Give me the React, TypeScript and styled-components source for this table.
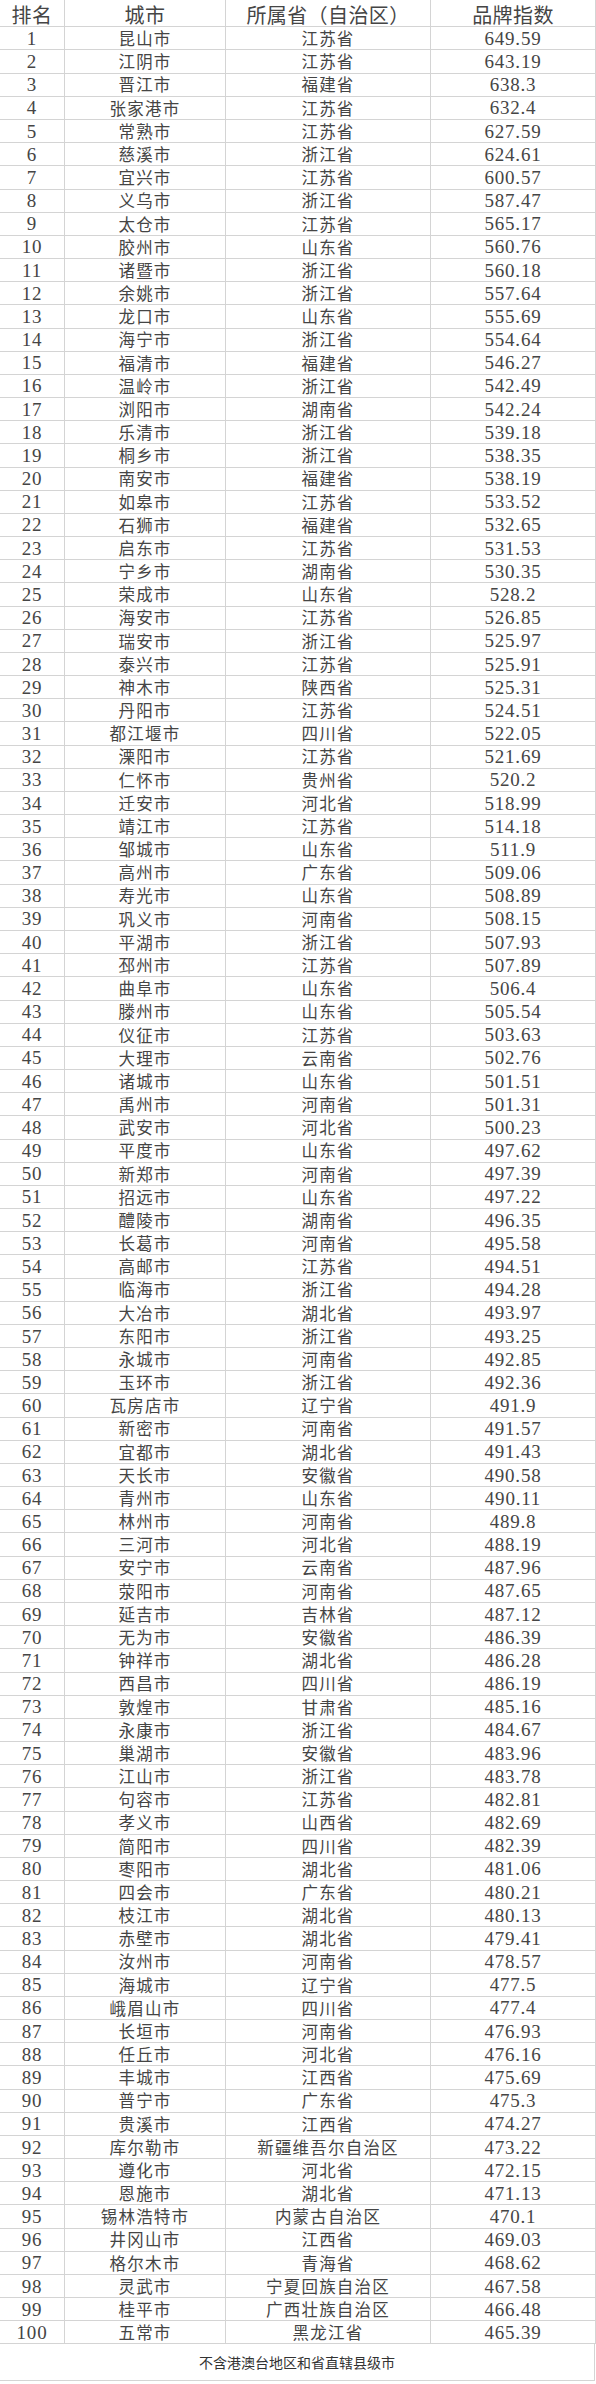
import styled, { createGlobalStyle } from 'styled-components'

const GlobalStyle = createGlobalStyle`
  html, body {
    margin: 0;
    padding: 0;
    background: #ffffff;
  }
`

type City = [string, string, string]

const cities: City[] = [
  ['昆山市', '江苏省', '649.59'],
  ['江阴市', '江苏省', '643.19'],
  ['晋江市', '福建省', '638.3'],
  ['张家港市', '江苏省', '632.4'],
  ['常熟市', '江苏省', '627.59'],
  ['慈溪市', '浙江省', '624.61'],
  ['宜兴市', '江苏省', '600.57'],
  ['义乌市', '浙江省', '587.47'],
  ['太仓市', '江苏省', '565.17'],
  ['胶州市', '山东省', '560.76'],
  ['诸暨市', '浙江省', '560.18'],
  ['余姚市', '浙江省', '557.64'],
  ['龙口市', '山东省', '555.69'],
  ['海宁市', '浙江省', '554.64'],
  ['福清市', '福建省', '546.27'],
  ['温岭市', '浙江省', '542.49'],
  ['浏阳市', '湖南省', '542.24'],
  ['乐清市', '浙江省', '539.18'],
  ['桐乡市', '浙江省', '538.35'],
  ['南安市', '福建省', '538.19'],
  ['如皋市', '江苏省', '533.52'],
  ['石狮市', '福建省', '532.65'],
  ['启东市', '江苏省', '531.53'],
  ['宁乡市', '湖南省', '530.35'],
  ['荣成市', '山东省', '528.2'],
  ['海安市', '江苏省', '526.85'],
  ['瑞安市', '浙江省', '525.97'],
  ['泰兴市', '江苏省', '525.91'],
  ['神木市', '陕西省', '525.31'],
  ['丹阳市', '江苏省', '524.51'],
  ['都江堰市', '四川省', '522.05'],
  ['溧阳市', '江苏省', '521.69'],
  ['仁怀市', '贵州省', '520.2'],
  ['迁安市', '河北省', '518.99'],
  ['靖江市', '江苏省', '514.18'],
  ['邹城市', '山东省', '511.9'],
  ['高州市', '广东省', '509.06'],
  ['寿光市', '山东省', '508.89'],
  ['巩义市', '河南省', '508.15'],
  ['平湖市', '浙江省', '507.93'],
  ['邳州市', '江苏省', '507.89'],
  ['曲阜市', '山东省', '506.4'],
  ['滕州市', '山东省', '505.54'],
  ['仪征市', '江苏省', '503.63'],
  ['大理市', '云南省', '502.76'],
  ['诸城市', '山东省', '501.51'],
  ['禹州市', '河南省', '501.31'],
  ['武安市', '河北省', '500.23'],
  ['平度市', '山东省', '497.62'],
  ['新郑市', '河南省', '497.39'],
  ['招远市', '山东省', '497.22'],
  ['醴陵市', '湖南省', '496.35'],
  ['长葛市', '河南省', '495.58'],
  ['高邮市', '江苏省', '494.51'],
  ['临海市', '浙江省', '494.28'],
  ['大冶市', '湖北省', '493.97'],
  ['东阳市', '浙江省', '493.25'],
  ['永城市', '河南省', '492.85'],
  ['玉环市', '浙江省', '492.36'],
  ['瓦房店市', '辽宁省', '491.9'],
  ['新密市', '河南省', '491.57'],
  ['宜都市', '湖北省', '491.43'],
  ['天长市', '安徽省', '490.58'],
  ['青州市', '山东省', '490.11'],
  ['林州市', '河南省', '489.8'],
  ['三河市', '河北省', '488.19'],
  ['安宁市', '云南省', '487.96'],
  ['荥阳市', '河南省', '487.65'],
  ['延吉市', '吉林省', '487.12'],
  ['无为市', '安徽省', '486.39'],
  ['钟祥市', '湖北省', '486.28'],
  ['西昌市', '四川省', '486.19'],
  ['敦煌市', '甘肃省', '485.16'],
  ['永康市', '浙江省', '484.67'],
  ['巢湖市', '安徽省', '483.96'],
  ['江山市', '浙江省', '483.78'],
  ['句容市', '江苏省', '482.81'],
  ['孝义市', '山西省', '482.69'],
  ['简阳市', '四川省', '482.39'],
  ['枣阳市', '湖北省', '481.06'],
  ['四会市', '广东省', '480.21'],
  ['枝江市', '湖北省', '480.13'],
  ['赤壁市', '湖北省', '479.41'],
  ['汝州市', '河南省', '478.57'],
  ['海城市', '辽宁省', '477.5'],
  ['峨眉山市', '四川省', '477.4'],
  ['长垣市', '河南省', '476.93'],
  ['任丘市', '河北省', '476.16'],
  ['丰城市', '江西省', '475.69'],
  ['普宁市', '广东省', '475.3'],
  ['贵溪市', '江西省', '474.27'],
  ['库尔勒市', '新疆维吾尔自治区', '473.22'],
  ['遵化市', '河北省', '472.15'],
  ['恩施市', '湖北省', '471.13'],
  ['锡林浩特市', '内蒙古自治区', '470.1'],
  ['井冈山市', '江西省', '469.03'],
  ['格尔木市', '青海省', '468.62'],
  ['灵武市', '宁夏回族自治区', '467.58'],
  ['桂平市', '广西壮族自治区', '466.48'],
  ['五常市', '黑龙江省', '465.39'],
]

const Page = styled.div`
  width: 596px;
  background: #ffffff;
  color: #454545;
`

const Row = styled.div<{ $header?: boolean }>`
  display: grid;
  grid-template-columns: 65px 161px 205px 165px;
  height: ${p => (p.$header ? '27.3px' : '23.18px')};
`

const Cell = styled.div<{ $header?: boolean; $num?: boolean }>`
  box-sizing: border-box;
  display: flex;
  align-items: center;
  justify-content: center;
  border-right: 1px solid #d4d4d4;
  border-bottom: 1px solid #d4d4d4;
  white-space: nowrap;
  padding-top: ${p => (p.$header ? '3px' : '0')};
  font-family: ${p =>
    p.$num
      ? '"Liberation Serif", "Noto Sans CJK SC", serif'
      : '"Noto Sans CJK SC", "Noto Sans", sans-serif'};
  font-size: ${p => (p.$header ? '20px' : p.$num ? '19px' : '16.5px')};
  letter-spacing: ${p => (p.$header ? '0.4px' : p.$num ? '0.8px' : '1.2px')};
  line-height: 1;
`

const Note = styled.div`
  box-sizing: border-box;
  width: 595px;
  height: 36.7px;
  display: flex;
  align-items: center;
  justify-content: center;
  border-right: 1px solid #d4d4d4;
  border-bottom: 1px solid #d4d4d4;
  font-family: "Noto Sans CJK SC", "Noto Sans", sans-serif;
  font-size: 14px;
  color: #333333;
`

export default function App() {
  return (
    <Page>
      <GlobalStyle />
      <Row $header>
        <Cell $header>排名</Cell>
        <Cell $header>城市</Cell>
        <Cell $header>所属省（自治区）</Cell>
        <Cell $header>品牌指数</Cell>
      </Row>
      {cities.map(([city, province, score], i) => (
        <Row key={city}>
          <Cell $num>{i + 1}</Cell>
          <Cell>{city}</Cell>
          <Cell>{province}</Cell>
          <Cell $num>{score}</Cell>
        </Row>
      ))}
      <Note>不含港澳台地区和省直辖县级市</Note>
    </Page>
  )
}
